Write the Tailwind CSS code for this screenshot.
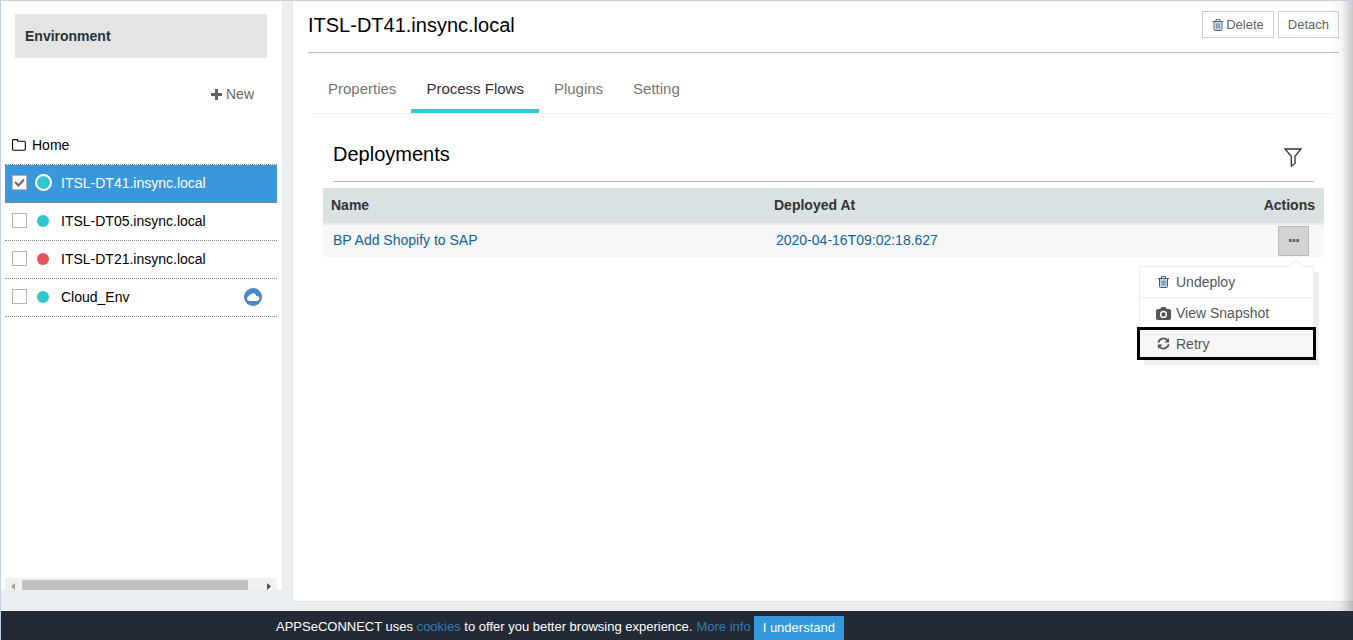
<!DOCTYPE html>
<html lang="en">
<head>
<meta charset="utf-8">
<title>Environment</title>
<script src="https://cdn.jsdelivr.net/npm/@tailwindcss/browser@4"></script>
</head>
<body class="relative flex h-screen flex-col overflow-hidden border-t border-l border-[#c5cfe3] bg-[#ebeff3] font-['Liberation_Sans',Arial,sans-serif] text-sm text-black">
<svg class="hidden">
  <symbol id="trash" viewBox="0 0 12 12"><path d="M2.500 3h7v8h-7z" fill="#b5d8f7"/><path d="M.5 2.500h11M4 2.500V.5h4v2M2 3v7.500q0 1 1 1h6q1 0 1-1V3" fill="none" stroke="currentColor"/><path d="M4.500 4.500v5M6 4.500v5M7.500 4.500v5" stroke="currentColor" stroke-width=".6"/></symbol>
</svg>
<div class="flex min-h-0 flex-1">
  <aside class="mb-[21px] flex w-[281px] shrink-0 flex-col bg-white">
    <h2 class="mr-[15px] ml-[14px] mt-[13px] flex h-11 items-center bg-[#e4e4e4] px-[10px] font-bold text-[#293038]">Environment</h2>
    <div class="mt-6 flex justify-end pr-7">
      <button class="flex h-6 items-center gap-1 text-[#636363]">
        <svg class="size-[11px]" viewBox="0 0 11 11"><path d="M4 0h3v4h4v3H7v4H4V7H0V4h4z" fill="currentColor"/></svg>New
      </button>
    </div>
    <nav class="mx-1 mt-[19px] mr-[5px]">
      <a href="#" class="flex h-[39px] items-center gap-[6px] pl-[7px]">
        <svg class="h-[12px] w-[14px]" viewBox="0 0 14 12"><path d="M.5 10V1.700Q.5.600 1.600.600h3q1 0 1.100 1v.6h6.400q1.200 0 1.200 1.200V10q0 1.200-1.200 1.200H1.700Q.5 11.200.5 10z" fill="none" stroke="currentColor" stroke-width="1.100"/></svg>Home
      </a>
      <ul class="border-t border-dotted border-[#888]">
        <li class="flex h-[38px] items-center border-b border-dotted border-[#888] bg-[#3998dc] pb-[2px] pl-[7px] text-white">
          <span class="relative flex"><input id="e1" type="checkbox" checked class="size-[15px] appearance-none border border-[#b5b5b5] bg-white"><svg class="pointer-events-none absolute inset-0 size-[15px]" viewBox="0 0 15 15"><path d="M3 7l3.500 3.500L12 4.500" fill="none" stroke="#666" stroke-width="2"/></svg></span>
          <span class="ml-2 size-[17px] rounded-full border-2 border-white bg-[#31c5d2]"></span>
          <label for="e1" class="ml-[9px]">ITSL-DT41.insync.local</label>
        </li>
        <li class="flex h-[38px] items-center border-b border-dotted border-[#888] pb-[2px] pl-[7px]">
          <input id="e2" type="checkbox" class="size-[15px] appearance-none border border-[#b5b5b5] bg-white">
          <span class="ml-[10px] size-3 rounded-full bg-[#31c5d2]"></span>
          <label for="e2" class="ml-3">ITSL-DT05.insync.local</label>
        </li>
        <li class="flex h-[38px] items-center border-b border-dotted border-[#888] pb-[2px] pl-[7px]">
          <input id="e3" type="checkbox" class="size-[15px] appearance-none border border-[#b5b5b5] bg-white">
          <span class="ml-[10px] size-3 rounded-full bg-[#e9505e]"></span>
          <label for="e3" class="ml-3">ITSL-DT21.insync.local</label>
        </li>
        <li class="flex h-[38px] items-center border-b border-dotted border-[#888] pr-[15px] pb-[2px] pl-[7px]">
          <input id="e4" type="checkbox" class="size-[15px] appearance-none border border-[#b5b5b5] bg-white">
          <span class="ml-[10px] size-3 rounded-full bg-[#31c5d2]"></span>
          <label for="e4" class="ml-3">Cloud_Env</label>
          <svg class="ml-auto size-[18px]" viewBox="0 0 18 18"><circle cx="9" cy="9" r="9" fill="#4a86cb"/><path d="M5.200 13a2.400 2.400 0 0 1-.5-4.700A2 2 0 0 1 6.600 6.600a3.200 3.200 0 0 1 5.800 1.400 2.500 2.500 0 0 1 .8 5z" fill="#fff"/></svg>
        </li>
      </ul>
    </nav>
    <div class="mx-1 mt-auto mr-[5px] flex h-3 items-end bg-[#f1f1f1]">
      <svg class="ml-[6px] h-[7px] w-1" viewBox="0 0 4 7"><path d="M4 0v7L0 3.500z" fill="#a3a3a3"/></svg>
      <span class="mr-[19px] ml-[7px] h-[10px] flex-1 bg-[#c1c1c1]"></span>
      <svg class="mr-[6px] h-[7px] w-1" viewBox="0 0 4 7"><path d="M0 0v7l4-3.500z" fill="#505050"/></svg>
    </div>
  </aside>
  <main class="mb-[9px] ml-[10px] min-w-0 flex-1 border-b border-l border-[#e0e6ec] bg-white pr-[14px] pl-[15px]">
    <header class="flex h-[52px] items-start justify-between border-b border-[#bbb] pt-[10px]">
      <h1 class="text-xl leading-7">ITSL-DT41.insync.local</h1>
      <div class="flex gap-1 text-[13px] text-[#636363]">
        <button class="flex h-[27px] items-center gap-[2px] border border-[#ccc] px-[9px] pt-px"><svg class="size-3"><use href="#trash"/></svg>Delete</button>
        <button class="flex h-[27px] items-center border border-[#ccc] px-[9px] pt-px">Detach</button>
      </div>
    </header>
    <nav class="mr-[5px] ml-[5px] flex h-[61px] items-end border-b border-[#efefef] text-[15px] text-[#757575]">
      <a href="#" class="h-9 px-[15px] leading-6">Properties</a>
      <a href="#" class="h-9 border-b-4 border-[#36c6d3] px-[15px] leading-6 text-[#333]">Process Flows</a>
      <a href="#" class="h-9 px-[15px] leading-6">Plugins</a>
      <a href="#" class="h-9 px-[15px] leading-6">Setting</a>
    </nav>
    <div class="mr-[25px] ml-[25px] flex h-[68px] items-start justify-between border-b border-[#bbb] pt-[26px] pr-3">
      <h2 class="text-xl leading-7">Deployments</h2>
      <button aria-label="Filter" class="mt-2"><svg class="h-[19px] w-[18px]" viewBox="0 0 18 19"><path d="M1 1h16l-6 7.300v7.200L7.300 18V8.300z" fill="none" stroke="#333" stroke-width="1.300"/></svg></button>
    </div>
    <div class="mt-[6px] mr-[15px] ml-[15px]">
      <table class="w-full table-fixed border-collapse text-left">
        <thead><tr class="h-9 border-b-2 border-[#e7ecf1] bg-[#d9e1e2] text-[#333]">
          <th class="w-[443px] pb-[2px] pl-2">Name</th><th class="pb-[2px] pl-2">Deployed At</th><th class="w-[100px] pr-[9px] pb-[2px] text-right">Actions</th>
        </tr></thead>
        <tbody><tr class="h-[33px] bg-[#f7f7f7] text-[#0e63a0]">
          <td class="pb-[2px] pl-[10px]"><a href="#">BP Add Shopify to SAP</a></td>
          <td class="pb-[2px] pl-[10px]"><a href="#">2020-04-16T09:02:18.627</a></td>
          <td class="pr-[15px]">
            <div class="relative ml-auto w-[31px]">
              <button aria-label="Actions" class="flex h-[30px] w-[31px] items-center justify-center border border-[#bbb] bg-[#d3d3d3] pb-[2px]"><svg class="h-[3px] w-[10px]" viewBox="0 0 10 3"><path d="M0 0h2.700v3H0zM3.650 0h2.700v3h-2.700zM7.300 0h2.700v3H7.300z" fill="#666"/></svg></button>
              <div class="absolute top-10 -right-[5px] z-10 w-[175px] border border-[#ebebeb] bg-white text-[#555] shadow-[5px_6px_0_0_#eee]">
                <svg class="absolute -top-2 right-[9px] h-2 w-4" viewBox="0 0 16 8"><path d="M0 8l8-7 8 7z" fill="#fff"/><path d="M1 8l7-7 7 7" fill="none" stroke="#e6e6e6"/></svg>
                <button class="flex h-[31px] w-full items-center gap-[5px] border-b border-[#ebebeb] pl-4"><svg class="h-3 w-[15px]"><use href="#trash"/></svg>Undeploy</button>
                <button class="flex h-[30px] w-full items-center gap-[5px] pl-4"><svg class="h-[13px] w-[15px]" viewBox="0 0 15 13"><path fill-rule="evenodd" d="M2 2h2.200L5 .5Q5.200 0 6 0h3q.8 0 1 .5L10.800 2H13q2 0 2 2v7q0 2-2 2H2q-2 0-2-2V4q0-2 2-2zm5.500 1.800a3.600 3.600 0 1 0 0 7.200 3.600 3.600 0 0 0 0-7.200zm0 1.400a2.200 2.200 0 1 1 0 4.400 2.200 2.200 0 0 1 0-4.400z" fill="currentColor"/></svg>View Snapshot</button>
                <button class="-mx-[3px] -mt-px -mb-[2px] flex h-[33px] w-[179px] items-center gap-[5px] border-3 border-black bg-[#f6f6f6] pl-4"><svg class="h-[13px] w-[15px]" viewBox="0 0 14 14"><path d="M1.500 6A5.600 5.600 0 0 1 11.300 3.500M12.500 8a5.600 5.600 0 0 1-9.800 2.500" fill="none" stroke="currentColor" stroke-width="2"/><path d="M13 1v5H8zM1 13V8h5z" fill="currentColor"/></svg>Retry</button>
              </div>
            </div>
          </td>
        </tr></tbody>
      </table>
    </div>
  </main>
</div>
<footer class="flex h-[29px] shrink-0 items-end bg-[#232a35] pl-[275px] text-[13px] text-white">
  <p class="flex h-[29px] items-center gap-1 pt-1"><span>APPSeCONNECT uses <a href="#" class="text-[#337ab7]">cookies</a> to offer you better browsing experience.</span><a href="#" class="text-[#337ab7]">More info</a></p>
  <button class="ml-[3px] h-6 bg-[#3598dc] px-[9px]">I understand</button>
</footer>
<div class="pointer-events-none absolute top-0 right-0 bottom-[29px] w-6 bg-linear-to-r from-transparent via-black/3 to-black/22"></div>
</body>
</html>
